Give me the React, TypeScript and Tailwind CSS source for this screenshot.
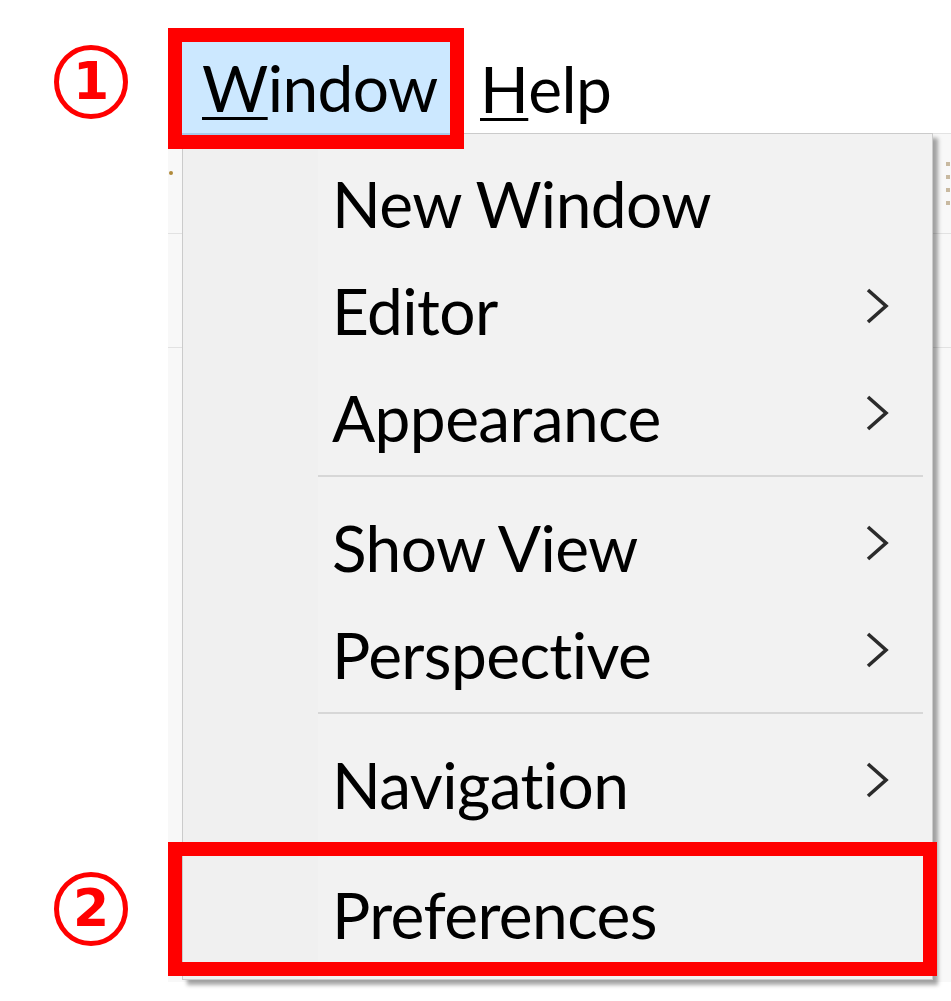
import React from "react";

type Item = { label: string; sub?: boolean } | "sep";

const ITEMS: Item[] = [
  { label: "New Window" },
  { label: "Editor", sub: true },
  { label: "Appearance", sub: true },
  "sep",
  { label: "Show View", sub: true },
  { label: "Perspective", sub: true },
  "sep",
  { label: "Navigation", sub: true },
  "sep",
  { label: "Preferences" },
];

function Chevron() {
  return (
    <svg width="26" height="38" viewBox="0 0 26 38" className="-mt-[10px] shrink-0">
      <polyline points="4,3 22,19 4,35" fill="none" stroke="#2b2b2b" strokeWidth="3.6" strokeLinejoin="miter" />
    </svg>
  );
}

function Circled({ n }: { n: string }) {
  return (
    <div className="grid h-[74px] w-[74px] place-items-center rounded-full border-[5px] border-[#ff0000] font-['DejaVu_Sans',sans-serif] text-[52px] font-bold leading-none text-[#ff0000]">
      <span className="-mt-[2px]">{n}</span>
    </div>
  );
}

export default function App() {
  return (
    <div className="flex min-h-screen bg-white font-['Lato','Open_Sans',sans-serif] text-black [font-variant-ligatures:none]">
      <div className="flex w-[168px] shrink-0 flex-col pl-[54px]">
        <div className="mt-[45px]">
          <Circled n="1" />
        </div>
        <div className="mt-[753px]">
          <Circled n="2" />
        </div>
      </div>

      <div className="flex h-[982px] flex-1 flex-col">
        {/* menu bar */}
        <div className="relative z-10 flex h-[133px] items-start bg-white pt-[28px] text-[64px] leading-none tracking-[-0.6px]">
          <div className="border-[14px] border-[#ff0000]">
            <div className="flex h-[93px] w-[268px] items-center border-b-2 border-[#a8c9ea] bg-[#cce8ff] pl-[20px]">
              <span className="underline decoration-[2.5px] underline-offset-[5px]">W</span>indow
            </div>
          </div>
          <div className="ml-[16px] flex h-[121px] items-center">
            <span className="underline decoration-[2.5px] underline-offset-[5px]">H</span>elp
          </div>
        </div>

        {/* workbench behind the menu */}
        <div className="relative flex flex-1 flex-col border-t border-[#e3e3e3] bg-[#f8f8f8]">
          <div className="relative h-[100px] border-b border-[#e2e2e2]">
            <span className="absolute left-[1px] top-[37px] h-[4px] w-[4px] rounded-full bg-[#b08a3a]" />
            <div className="absolute right-[1px] top-[28px] flex flex-col gap-[9px]">
              <span className="h-[4px] w-[4px] bg-[#c8b9a0]" />
              <span className="h-[4px] w-[4px] bg-[#c8b9a0]" />
              <span className="h-[4px] w-[4px] bg-[#c8b9a0]" />
              <span className="h-[4px] w-[4px] bg-[#c8b9a0]" />
            </div>
          </div>
          <div className="h-[114px] border-b border-[#e2e2e2]" />

          {/* dropdown */}
          <div className="absolute left-[14px] top-[-1px] flex h-[847px] w-[751px] border border-[#cbcbcb] bg-[#f2f2f2] text-[64px] leading-none tracking-[-0.6px] shadow-[5px_5px_4px_rgba(0,0,0,0.35)]">
            <div className="w-[135px] shrink-0 bg-[#f0f0f0]" />
            <div className="flex flex-1 flex-col pt-[16px]">
              {ITEMS.map((it, i) =>
                it === "sep" ? (
                  <div key={i} className="h-[23px] pt-[4px] pr-[9px]">
                    <div className="h-[2px] bg-[#d7d7d7]" />
                  </div>
                ) : (
                  <div key={i} className="flex h-[107px] items-center justify-between pl-[14px] pr-[42px]">
                    <span>{it.label}</span>
                    {it.sub && <Chevron />}
                  </div>
                )
              )}
            </div>
            <div className="absolute left-[-15px] top-[708px] h-[134px] w-[769px] border-[14px] border-[#ff0000]" />
          </div>
        </div>
      </div>
    </div>
  );
}
